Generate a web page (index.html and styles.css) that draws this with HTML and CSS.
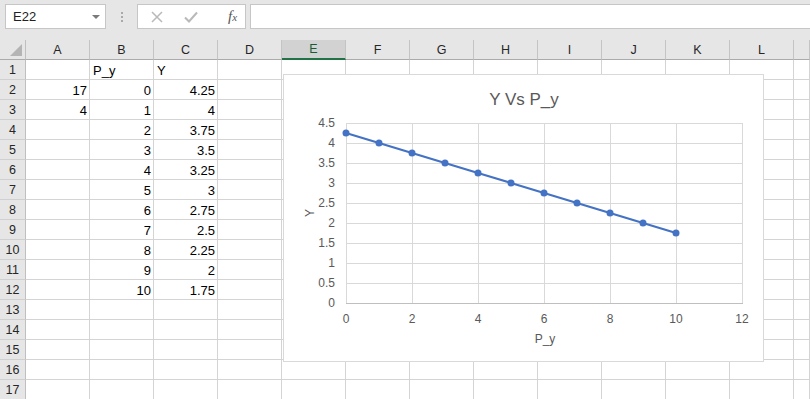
FILE: index.html
```html
<!DOCTYPE html>
<html lang="en">
<head>
  <meta charset="UTF-8">
  <meta name="viewport" content="width=device-width, initial-scale=1.0">
  <title>Book1 - Excel</title>
  <link rel="stylesheet" href="styles.css">
</head>
<body>

  <div class="toolbar">
    <div class="namebox">
      <span>E22</span>
      <span class="caret"></span>
    </div>
    <div class="dots"><i></i><i></i><i></i></div>
    <div class="fxbox">
      <svg class="tool-icon" width="14" height="14" viewBox="0 0 14 14">
        <path d="M2 2 L12 12 M12 2 L2 12" stroke="#b9b9b9" stroke-width="1.5" fill="none"/>
      </svg>
      <svg class="tool-icon" width="16" height="14" viewBox="0 0 16 14">
        <path d="M2 7.5 L6 11.5 L14 2.5" stroke="#b9b9b9" stroke-width="2" fill="none"/>
      </svg>
      <span class="fx">f<small>x</small></span>
    </div>
    <div class="formula"></div>
  </div>

  <div class="sheet" id="sheet"></div>

  <div class="chart">
    <svg width="479" height="286" viewBox="0 0 479 286">
      <text class="chart-title" x="240" y="30" text-anchor="middle">Y Vs P_y</text>

      <g class="grid">
        <line x1="62" y1="48.5" x2="458" y2="48.5"/>
        <line x1="62" y1="68.5" x2="458" y2="68.5"/>
        <line x1="62" y1="88.5" x2="458" y2="88.5"/>
        <line x1="62" y1="108.5" x2="458" y2="108.5"/>
        <line x1="62" y1="128.5" x2="458" y2="128.5"/>
        <line x1="62" y1="148.5" x2="458" y2="148.5"/>
        <line x1="62" y1="168.5" x2="458" y2="168.5"/>
        <line x1="62" y1="188.5" x2="458" y2="188.5"/>
        <line x1="62" y1="208.5" x2="458" y2="208.5"/>
        <line x1="62.5" y1="48" x2="62.5" y2="228"/>
        <line x1="128.5" y1="48" x2="128.5" y2="228"/>
        <line x1="194.5" y1="48" x2="194.5" y2="228"/>
        <line x1="260.5" y1="48" x2="260.5" y2="228"/>
        <line x1="326.5" y1="48" x2="326.5" y2="228"/>
        <line x1="392.5" y1="48" x2="392.5" y2="228"/>
        <line x1="458.5" y1="48" x2="458.5" y2="228"/>
      </g>
      <line class="axis" x1="62" y1="228.5" x2="459" y2="228.5"/>

      <g class="tick" text-anchor="end">
        <text x="51" y="52">4.5</text>
        <text x="51" y="72">4</text>
        <text x="51" y="92">3.5</text>
        <text x="51" y="112">3</text>
        <text x="51" y="132">2.5</text>
        <text x="51" y="152">2</text>
        <text x="51" y="172">1.5</text>
        <text x="51" y="192">1</text>
        <text x="51" y="212">0.5</text>
        <text x="51" y="232">0</text>
      </g>
      <g class="tick" text-anchor="middle">
        <text x="62" y="248">0</text>
        <text x="128" y="248">2</text>
        <text x="194" y="248">4</text>
        <text x="260" y="248">6</text>
        <text x="326" y="248">8</text>
        <text x="392" y="248">10</text>
        <text x="458" y="248">12</text>
      </g>

      <text class="axis-title" x="261" y="268" text-anchor="middle">P_y</text>
      <text class="axis-title" transform="translate(30,138) rotate(-90)" text-anchor="middle">Y</text>

      <polyline class="series" points="62,58 95,68 128,78 161,88 194,98 227,108 260,118 293,128 326,138 359,148 392,158"/>
      <g class="marker">
        <circle cx="62" cy="58" r="3.5"/>
        <circle cx="95" cy="68" r="3.5"/>
        <circle cx="128" cy="78" r="3.5"/>
        <circle cx="161" cy="88" r="3.5"/>
        <circle cx="194" cy="98" r="3.5"/>
        <circle cx="227" cy="108" r="3.5"/>
        <circle cx="260" cy="118" r="3.5"/>
        <circle cx="293" cy="128" r="3.5"/>
        <circle cx="326" cy="138" r="3.5"/>
        <circle cx="359" cy="148" r="3.5"/>
        <circle cx="392" cy="158" r="3.5"/>
      </g>
    </svg>
  </div>

  <script>
    // last entry is the partly visible column at the right edge, left unlabelled
    const columns = ["A", "B", "C", "D", "E", "F", "G", "H", "I", "J", "K", "L", ""];
    const rowCount = 17;
    const selectedCol = "E";

    const data = {
      1: { B: "P_y", C: "Y" },
      2: { A: 17, B: 0, C: 4.25 },
      3: { A: 4, B: 1, C: 4 },
      4: { B: 2, C: 3.75 },
      5: { B: 3, C: 3.5 },
      6: { B: 4, C: 3.25 },
      7: { B: 5, C: 3 },
      8: { B: 6, C: 2.75 },
      9: { B: 7, C: 2.5 },
      10: { B: 8, C: 2.25 },
      11: { B: 9, C: 2 },
      12: { B: 10, C: 1.75 }
    };

    const sheet = document.getElementById("sheet");

    function addCell(className, text) {
      const div = document.createElement("div");
      div.className = className;
      if (text !== undefined) div.textContent = text;
      sheet.appendChild(div);
    }

    // header row
    addCell("corner");
    columns.forEach(c => {
      addCell(c === selectedCol ? "colhead selected" : "colhead", c);
    });

    // body rows
    for (let r = 1; r <= rowCount; r++) {
      addCell("rowhead", r);
      columns.forEach(c => {
        const value = data[r] ? data[r][c] : undefined;
        if (value === undefined) {
          addCell("cell");
        } else {
          addCell(typeof value === "number" ? "cell num" : "cell", value);
        }
      });
    }
  </script>

</body>
</html>
```

FILE: styles.css
```css
body {
  margin: 0;
  width: 810px;
  height: 399px;
  overflow: hidden;
  background-color: #ffffff;
  font-family: "Liberation Sans", Arial, sans-serif;
  position: relative;
}

/* formula bar */
.toolbar {
  height: 40px;
  background-color: #e6e6e6;
  display: flex;
  align-items: flex-start;
  padding-top: 4px;
  box-sizing: border-box;
}
.namebox {
  margin-left: 5px;
  width: 101px;
  height: 25px;
  box-sizing: border-box;
  border: 1px solid #c6c6c6;
  background-color: #ffffff;
  display: flex;
  align-items: center;
  justify-content: space-between;
  padding: 0 5px 0 7px;
  font-size: 13px;
  color: #222222;
}
.caret {
  width: 0;
  height: 0;
  border-left: 4px solid transparent;
  border-right: 4px solid transparent;
  border-top: 4px solid #7a7a7a;
}
.dots {
  width: 31px;
  height: 25px;
  display: flex;
  flex-direction: column;
  align-items: center;
  justify-content: center;
  gap: 2px;
}
.dots i {
  width: 2px;
  height: 2px;
  background-color: #a9a9a9;
}
.fxbox {
  width: 109px;
  height: 25px;
  box-sizing: border-box;
  border: 1px solid #c6c6c6;
  background-color: #ffffff;
  display: flex;
  align-items: center;
  padding-left: 12px;
  gap: 19px;
}
.fx {
  margin-left: 10px;
  font-family: "Liberation Serif", serif;
  font-style: italic;
  font-size: 15px;
  color: #555555;
}
.fx small {
  font-size: 11px;
}
.formula {
  flex: 1;
  margin-left: 4px;
  height: 25px;
  box-sizing: border-box;
  border: 1px solid #c6c6c6;
  border-right: none;
  background-color: #ffffff;
}

/* grid */
.sheet {
  display: grid;
  grid-template-columns: 26px repeat(12, 64px) 1fr;
  grid-auto-rows: 20px;
  font-size: 13px;
  color: #000000;
}
.corner {
  background-color: #e6e6e6;
  border-right: 1px solid #bfbfbf;
  border-bottom: 1px solid #ababab;
  position: relative;
}
.corner::after {
  content: "";
  position: absolute;
  right: 3px;
  bottom: 3px;
  width: 0;
  height: 0;
  border-left: 12px solid transparent;
  border-bottom: 12px solid #b4b4b4;
}
.colhead {
  background-color: #e6e6e6;
  border-right: 1px solid #c4c4c4;
  border-bottom: 1px solid #ababab;
  display: flex;
  align-items: center;
  justify-content: center;
  font-size: 12.5px;
  color: #262626;
}
.colhead.selected {
  background-color: #d2d2d2;
  border-bottom: 2px solid #217346;
  color: #185c37;
}
.rowhead {
  background-color: #e6e6e6;
  border-right: 1px solid #bfbfbf;
  border-bottom: 1px solid #d0d0d0;
  display: flex;
  align-items: center;
  justify-content: center;
  font-size: 12.5px;
  color: #262626;
}
.cell {
  border-right: 1px solid #d4d4d4;
  border-bottom: 1px solid #d4d4d4;
  display: flex;
  align-items: flex-end;
  padding: 0 3px 1px 3px;
  line-height: 15px;
  white-space: nowrap;
  overflow: hidden;
}
.cell.num {
  justify-content: flex-end;
  padding-right: 2px;
}

/* chart, floating over the cells */
.chart {
  position: absolute;
  left: 283px;
  top: 74px;
  width: 481px;
  height: 288px;
  box-sizing: border-box;
  border: 1px solid #d9d9d9;
  background-color: #ffffff;
}
.chart svg {
  display: block;
}
.chart text {
  font-family: "Liberation Sans", Arial, sans-serif;
  fill: #595959;
}
.chart-title {
  font-size: 17px;
}
.grid line {
  stroke: #d9d9d9;
  stroke-width: 1;
  shape-rendering: crispEdges;
}
.axis {
  stroke: #bfbfbf;
  stroke-width: 1;
  shape-rendering: crispEdges;
}
.tick {
  font-size: 12px;
}
.axis-title {
  font-size: 12px;
}
.series {
  fill: none;
  stroke: #4472c4;
  stroke-width: 2.25;
  stroke-linejoin: round;
}
.marker circle {
  fill: #4472c4;
}
```
